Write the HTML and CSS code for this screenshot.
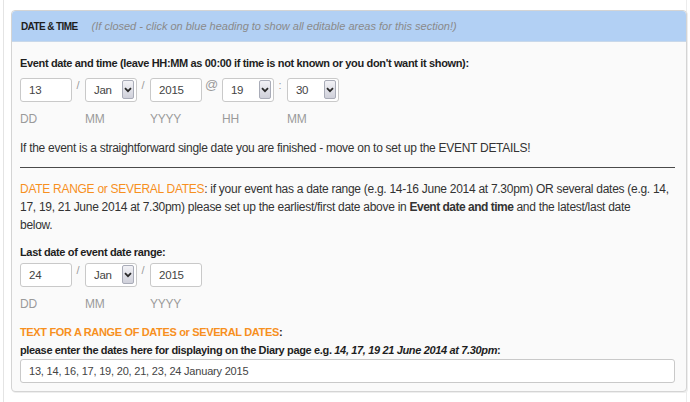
FILE: index.html
```html
<!DOCTYPE html>
<html lang="en">
<head>
  <meta charset="UTF-8" />
  <title>Date &amp; Time</title>
  <link rel="stylesheet" href="styles.css">
</head>
<body>
  <div class="outer">
    <div class="panel">
      <div class="panel-head">
        <b>DATE &amp; TIME</b>
        <i>(If closed - click on blue heading to show all editable areas for this section!)</i>
      </div>

      <div class="panel-body">
        <div class="lbl first">Event date and time (leave HH:MM as 00:00 if time is not known or you don't want it shown):</div>

        <div class="date-grid full">
          <div class="field">13</div>
          <span class="sep">/</span>
          <div class="dd"><span>Jan</span><span class="arr"><svg width="8" height="6" viewBox="0 0 8 6"><path d="M1 1.2 L4 4.2 L7 1.2" fill="none" stroke="#2a2a2a" stroke-width="1.8"/></svg></span></div>
          <span class="sep">/</span>
          <div class="field">2015</div>
          <span class="sep at">@</span>
          <div class="dd"><span>19</span><span class="arr"><svg width="8" height="6" viewBox="0 0 8 6"><path d="M1 1.2 L4 4.2 L7 1.2" fill="none" stroke="#2a2a2a" stroke-width="1.8"/></svg></span></div>
          <span class="sep">:</span>
          <div class="dd"><span>30</span><span class="arr"><svg width="8" height="6" viewBox="0 0 8 6"><path d="M1 1.2 L4 4.2 L7 1.2" fill="none" stroke="#2a2a2a" stroke-width="1.8"/></svg></span></div>

          <span class="hint">DD</span><span></span>
          <span class="hint">MM</span><span></span>
          <span class="hint">YYYY</span><span></span>
          <span class="hint">HH</span><span></span>
          <span class="hint">MM</span>
        </div>

        <p class="note">If the event is a straightforward single date you are finished - move on to set up the EVENT DETAILS!</p>

        <hr>

        <p class="range"><span class="orange">DATE RANGE or SEVERAL DATES</span>: if your event has a date range (e.g. 14-16 June 2014 at 7.30pm) OR several dates (e.g. 14, 17, 19, 21 June 2014 at 7.30pm) please set up the earliest/first date above in <b>Event date and time</b> and the latest/last date<br>below.</p>

        <div class="lbl second">Last date of event date range:</div>

        <div class="date-grid short">
          <div class="field">24</div>
          <span class="sep">/</span>
          <div class="dd"><span>Jan</span><span class="arr"><svg width="8" height="6" viewBox="0 0 8 6"><path d="M1 1.2 L4 4.2 L7 1.2" fill="none" stroke="#2a2a2a" stroke-width="1.8"/></svg></span></div>
          <span class="sep">/</span>
          <div class="field">2015</div>

          <span class="hint">DD</span><span></span>
          <span class="hint">MM</span><span></span>
          <span class="hint">YYYY</span>
        </div>

        <div class="lbl third"><span class="orange">TEXT FOR A RANGE OF DATES or SEVERAL DATES</span>:</div>
        <div class="lbl">please enter the dates here for displaying on the Diary page e.g. <i>14, 17, 19 21 June 2014 at 7.30pm</i>:</div>
        <div class="field wide">13, 14, 16, 17, 19, 20, 21, 23, 24 January 2015</div>
      </div>
    </div>
  </div>
</body>
</html>
```

FILE: styles.css
```css
body {
  margin: 0;
  font-family: "Liberation Sans", Arial, sans-serif;
  font-size: 12px;
  letter-spacing: -0.28px;
  color: #333;
  background: #fff;
}
.outer {
  width: 684px;
  margin-left: 3px;
  padding: 10px 0 9px 7px;
  border-left: 1px solid #e4e4e4;
  border-right: 1px solid #ececec;
  box-sizing: border-box;
  height: 402px;
}
.panel {
  width: 674px;
  border: 1px solid #d4d4d4;
  border-radius: 4px;
  background: #fafafa;
  box-shadow: 1px 1px 0 #eee;
}
.panel-head {
  background: #b2d0f4;
  border-bottom: 1px solid #c8d8ea;
  border-radius: 4px 4px 0 0;
  height: 30px;
  line-height: 31px;
  padding-left: 9px;
  font-size: 11px;
  letter-spacing: 0;
  color: #1e1e1e;
}
.panel-head b {
  font-size: 10px;
  letter-spacing: -0.6px;
}
.panel-head i {
  color: #8a8a8a;
  margin-left: 11px;
}
.panel-body {
  padding: 12px 10px 8px 8px;
}
.lbl {
  font-weight: bold;
  font-size: 11px;
  letter-spacing: -0.35px;
  line-height: 18px;
  color: #1e1e1e;
}
.lbl i {
  font-style: italic;
}
.lbl.first {
  margin-bottom: 6px;
}
.lbl.second {
  margin-top: 9px;
  margin-bottom: 2px;
}
.lbl.third {
  margin-top: 10px;
}
.orange {
  color: #f7901e;
}
.date-grid {
  display: grid;
  row-gap: 8px;
  align-items: start;
}
.date-grid.full {
  grid-template-columns: 52px 13px 52px 13px 52px 20px 52px 13px 52px;
}
.date-grid.short {
  grid-template-columns: 52px 13px 52px 13px 52px;
}
.field {
  height: 24px;
  line-height: 22px;
  border: 1px solid #c9c9c9;
  border-radius: 3px;
  background: #fff;
  padding-left: 8px;
  box-sizing: border-box;
  color: #444;
  font-size: 11.5px;
  letter-spacing: -0.2px;
}
.field.wide {
  width: 655px;
  font-size: 11px;
}
.dd {
  display: flex;
  justify-content: space-between;
  height: 24px;
  line-height: 22px;
  border: 1px solid #c9c9c9;
  border-radius: 3px;
  background: #fff;
  padding: 1px 2px 2px 8px;
  box-sizing: border-box;
  color: #444;
  font-size: 11.5px;
}
.dd span:first-child {
  margin-top: -1px;
}
.arr {
  width: 12px;
  display: flex;
  align-items: center;
  justify-content: center;
  border: 1px solid #a9acb8;
  border-radius: 2px;
  box-sizing: border-box;
  background: linear-gradient(#f2f2f6, #cfd0da);
}
.sep {
  color: #9a9a9a;
  font-size: 11px;
  line-height: 14px;
  text-align: center;
  margin-left: -1px;
}
.sep.at {
  font-size: 13px;
}
.hint {
  color: #9a9a9a;
  line-height: 18px;
}
.note {
  margin: 11px 0 10px;
  line-height: 18px;
}
hr {
  margin: 0;
  border: 0;
  border-top: 1px solid #4a4a4a;
  width: 655px;
}
.range {
  margin: 12px 0 0;
  line-height: 18px;
  width: 655px;
}
.range b {
  font-size: 12px;
  letter-spacing: -0.5px;
}
```
